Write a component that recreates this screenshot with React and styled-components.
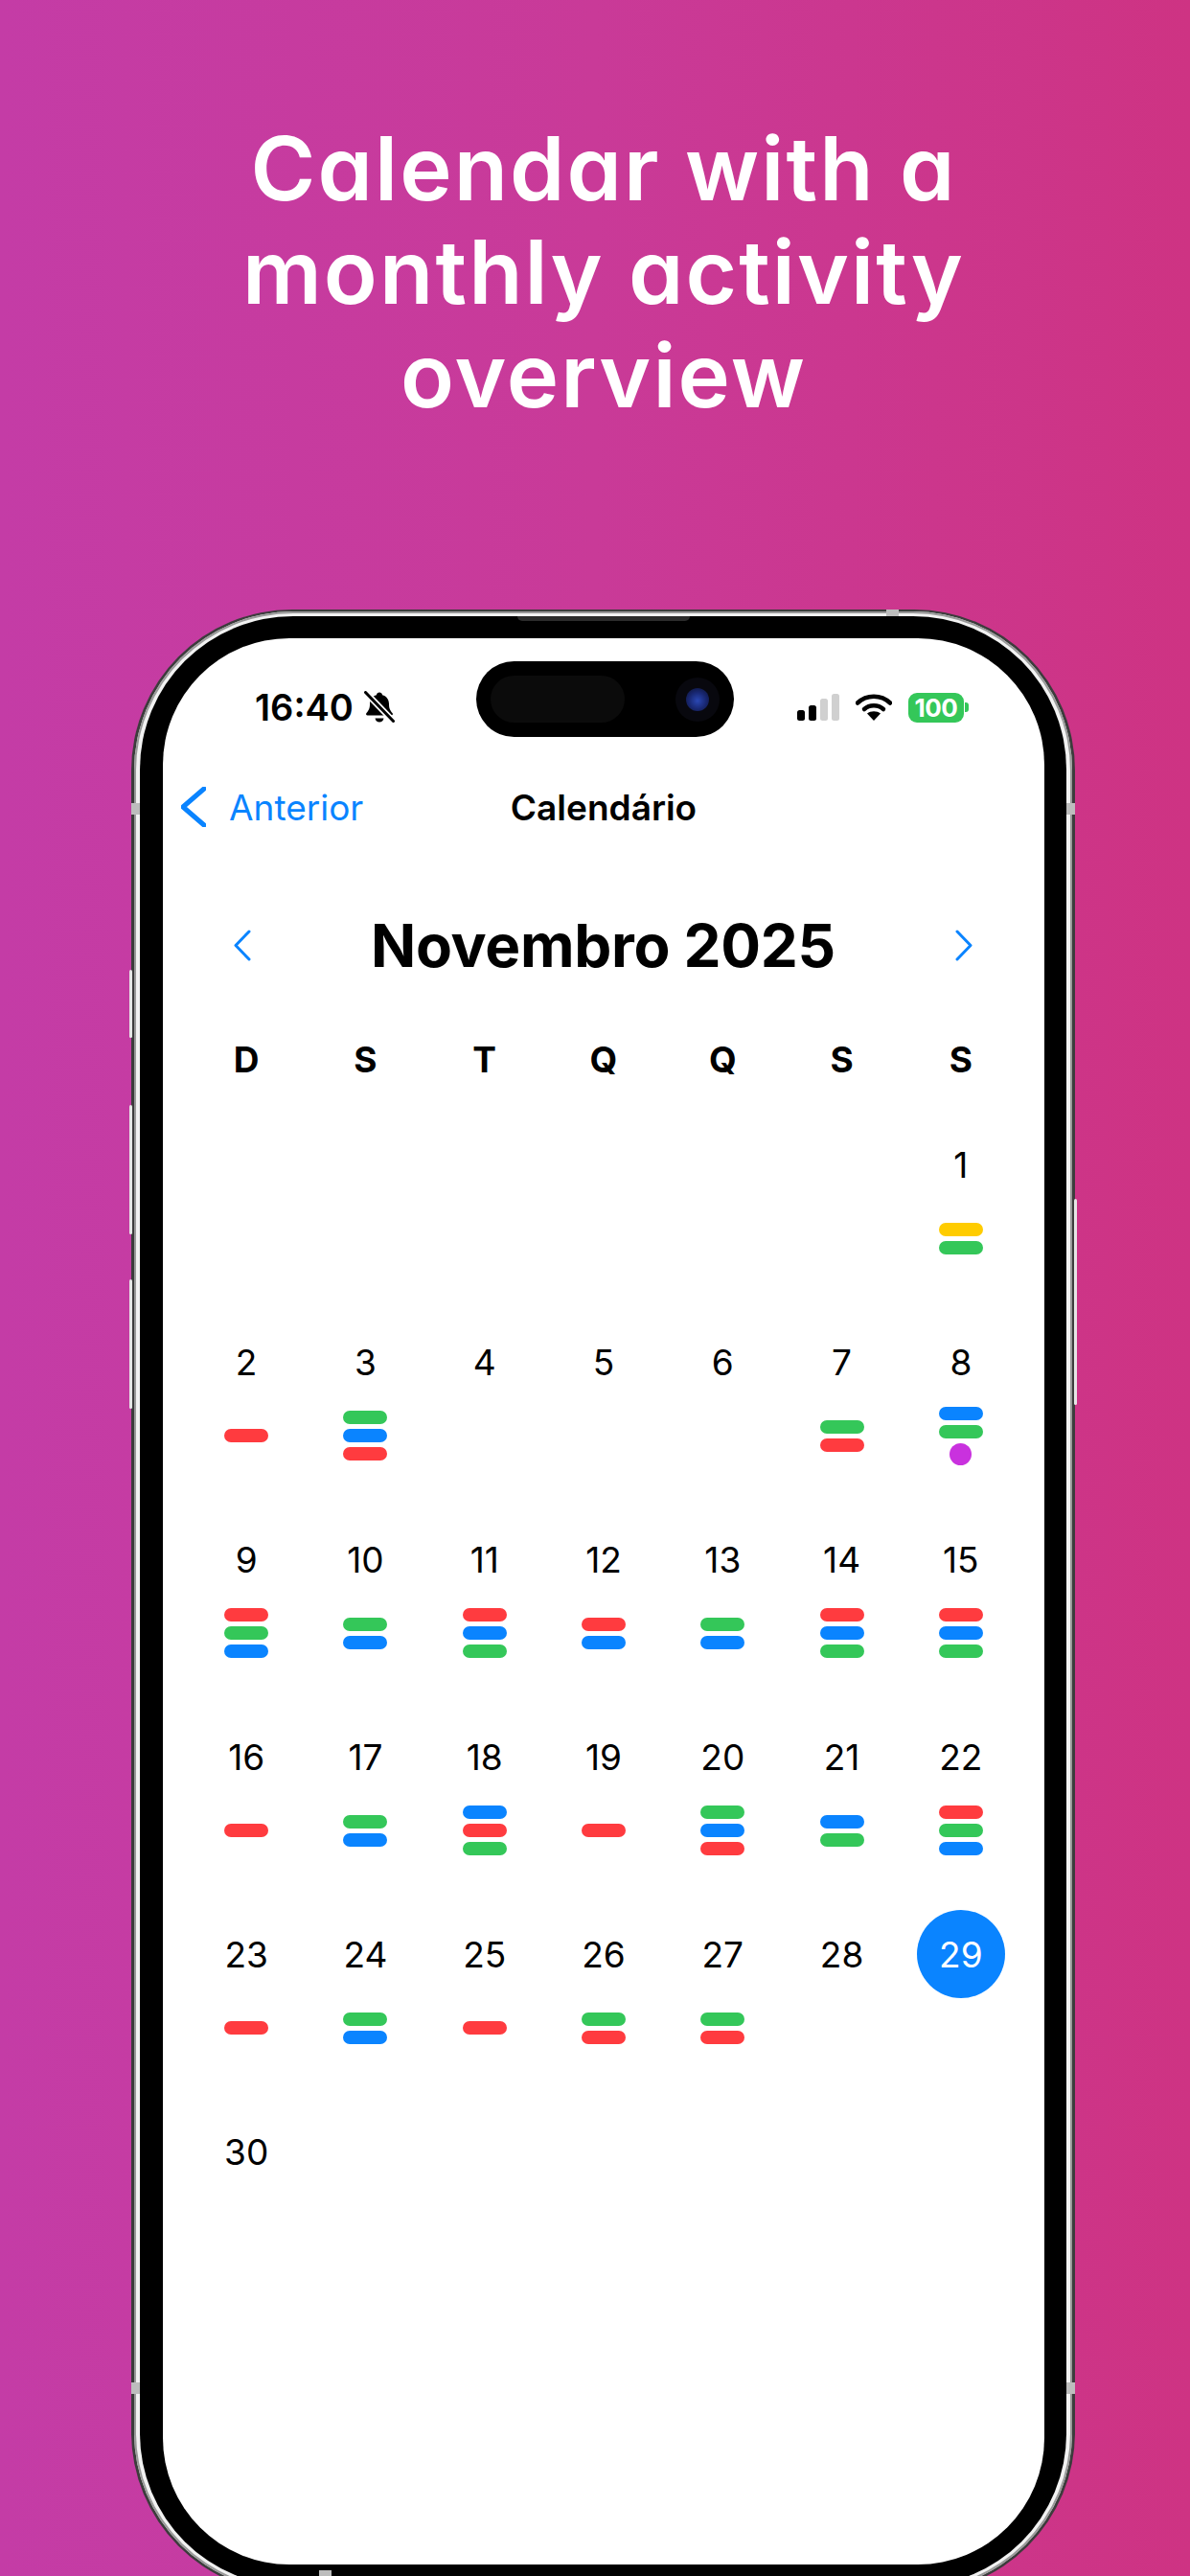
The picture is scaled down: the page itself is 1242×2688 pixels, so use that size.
import React from 'react'
import styled, { createGlobalStyle } from 'styled-components'

const RED = '#ff3b3f'
const GREEN = '#34c759'
const BLUE = '#0a84ff'
const YELLOW = '#ffcc00'
const PURPLE = '#c931de'

const r = RED
const g = GREEN
const b = BLUE
const y = YELLOW

const WEEK_DAYS = ['D', 'S', 'T', 'Q', 'Q', 'S', 'S']

const ACTIVITY = {
  1: [y, g],
  2: [r],
  3: [g, b, r],
  7: [g, r],
  8: [b, g],
  9: [r, g, b],
  10: [g, b],
  11: [r, b, g],
  12: [r, b],
  13: [g, b],
  14: [r, b, g],
  15: [r, b, g],
  16: [r],
  17: [g, b],
  18: [b, r, g],
  19: [r],
  20: [g, b, r],
  21: [b, g],
  22: [r, g, b],
  23: [r],
  24: [g, b],
  25: [r],
  26: [g, r],
  27: [g, r],
}

const GlobalStyle = createGlobalStyle`
  html, body {
    margin: 0;
    padding: 0;
    background: #c93a92;
  }
  * {
    box-sizing: border-box;
  }
`

const Page = styled.div`
  width: 1242px;
  height: 2688px;
  overflow: hidden;
  display: flex;
  flex-direction: column;
  background: linear-gradient(90deg, #c43ca6 0%, #c93a98 50%, #ce3383 100%);
  font-family: Inter, "Liberation Sans", sans-serif;
`

const Headline = styled.h1`
  margin: 0;
  padding: 122px 0 0 18px;
  height: 446px;
  text-align: center;
  color: #fff;
  font-size: 92px;
  line-height: 108px;
  font-weight: 600;
  letter-spacing: 2.1px;
  font-feature-settings: "cv11" 1;
`

const Phone = styled.div`
  position: relative;
  flex: none;
  margin-top: 190px;
  margin-left: 137px;
  width: 985px;
  height: 2070px;
  padding: 2px 3px;
  border-radius: 168px;
  background: #3c3c3c;
`

const Rim = styled.div`
  height: 100%;
  padding: 5px 6px;
  border-radius: 166px;
  background: #f2f2f2;
  box-shadow: inset 0 0 0 2px #9a9a9a;
`

const Bezel = styled.div`
  height: 100%;
  padding: 23px 23px 23px 24px;
  border-radius: 160px;
  background: #000;
`

const Screen = styled.div`
  position: relative;
  height: 100%;
  overflow: hidden;
  border-radius: 132px;
  background: #fff;
  color: #000;
`

const SideKey = styled.span`
  position: absolute;
  left: ${p => (p.$right ? '984px' : '-2px')};
  top: ${p => p.$top}px;
  width: 3px;
  height: ${p => p.$height}px;
  border-radius: 2px;
  background: #e6e6e6;
`

const AntennaBand = styled.span`
  position: absolute;
  left: ${p => p.$left}px;
  top: ${p => p.$top}px;
  width: ${p => p.$width}px;
  height: ${p => p.$height}px;
  background: #bdbdbd;
`

const Speaker = styled.span`
  position: absolute;
  left: 403px;
  top: 7px;
  width: 180px;
  height: 5px;
  border-radius: 0 0 6px 6px;
  background: #2b2b2b;
`

const Island = styled.div`
  position: absolute;
  left: 327px;
  top: 24px;
  width: 269px;
  height: 79px;
  display: flex;
  align-items: center;
  justify-content: space-between;
  padding-left: 15px;
  padding-right: 15px;
  border-radius: 40px;
  background: #000;
`

const IslandSensor = styled.span`
  width: 140px;
  height: 49px;
  border-radius: 25px;
  background: #0b0b0b;
`

const Lens = styled.span`
  width: 46px;
  height: 46px;
  display: flex;
  align-items: center;
  justify-content: center;
  border-radius: 50%;
  background: #08080e;

  &::after {
    content: '';
    width: 24px;
    height: 24px;
    border-radius: 50%;
    background: radial-gradient(circle at 50% 55%, #2a48b4 0%, #1a2a78 45%, #0a0f2c 100%);
  }
`

const StatusBar = styled.div`
  height: 144px;
  display: flex;
  align-items: center;
  justify-content: space-between;
  padding: 0 79px 0 96px;
`

const StatusGroup = styled.div`
  display: flex;
  align-items: center;
  gap: ${p => p.$gap}px;
`

const Clock = styled.span`
  font-size: 38px;
  font-weight: 600;
  line-height: 1;
`

const Signal = styled.div`
  display: flex;
  align-items: flex-end;
  gap: 4px;
  height: 28px;
`

const SignalBar = styled.span`
  width: 8px;
  height: ${p => p.$height}px;
  border-radius: 2.5px;
  background: ${p => (p.$off ? '#d0d0d0' : '#000')};
`

const Battery = styled.div`
  display: flex;
  align-items: center;
  gap: 1px;
`

const BatteryBody = styled.div`
  width: 58px;
  height: 31px;
  display: flex;
  align-items: center;
  justify-content: center;
  border-radius: 9px;
  background: ${GREEN};
  color: #fff;
  font-size: 26px;
  font-weight: 700;
  letter-spacing: -0.5px;
`

const BatteryNub = styled.span`
  width: 4px;
  height: 10px;
  border-radius: 0 3px 3px 0;
  background: ${GREEN};
`

const NavBar = styled.div`
  height: 64px;
  display: grid;
  grid-template-columns: 1fr auto 1fr;
  align-items: center;
  padding-left: 19px;
  padding-right: 19px;
  font-size: 37px;
`

const BackLink = styled.div`
  display: flex;
  align-items: center;
  gap: 24px;
  color: ${BLUE};
`

const NavTitle = styled.div`
  font-weight: 600;
`

const MonthRow = styled.div`
  height: 100px;
  margin-top: 62px;
  display: flex;
  align-items: center;
  justify-content: space-between;
  padding: 0 75px 0 74px;
`

const MonthTitle = styled.div`
  font-size: 62px;
  font-weight: 700;
  letter-spacing: -0.3px;
`

const CalendarBody = styled.div`
  padding: 0 25px;
`

const WeekRow = styled.div`
  height: 50px;
  margin-top: 44px;
  display: grid;
  grid-template-columns: repeat(7, 1fr);
  align-items: center;
  text-align: center;
  font-size: 37px;
  font-weight: 700;
`

const DaysGrid = styled.div`
  margin-top: 39px;
  display: grid;
  grid-template-columns: repeat(7, 1fr);
  grid-auto-rows: 206px;
`

const DayCell = styled.div`
  display: flex;
  flex-direction: column;
  align-items: center;
`

const DayNumber = styled.div`
  width: 92px;
  height: 92px;
  display: flex;
  align-items: center;
  justify-content: center;
  border-radius: 50%;
  font-size: 37px;
  background: ${p => (p.$today ? BLUE : 'transparent')};
  color: ${p => (p.$today ? '#fff' : '#000')};
`

const Bars = styled.div`
  height: 62px;
  display: flex;
  flex-direction: column;
  align-items: center;
  justify-content: center;
  gap: 5px;
`

const Bar = styled.span`
  width: 46px;
  height: 14px;
  border-radius: 7px;
  background: ${p => p.$color};
`

const Dot = styled.span`
  width: 23px;
  height: 23px;
  border-radius: 50%;
  background: ${PURPLE};
`

function BellSlash() {
  return (
    <svg width="32" height="34" viewBox="0 0 32 34">
      <path d="M16 1.5c1.6 0 2.8 1.1 3 2.7 4.6 1.2 7 5 7 9.5 0 4.800 1.500 7 3.500 9.300.9 1.100.3 2.500-1.100 2.500H3.600c-1.400 0-2-1.400-1.100-2.500C4.500 20.700 6 18.500 6 13.700c0-4.500 2.400-8.300 7-9.500.2-1.600 1.400-2.700 3-2.700z" fill="#000" />
      <path d="M11.500 28.500h9c-.4 2.400-2.200 4-4.500 4s-4.100-1.600-4.500-4z" fill="#000" />
      <path d="M2 2l28 29" stroke="#fff" strokeWidth="6.500" />
      <path d="M1.500 1.500l29 30" stroke="#000" strokeWidth="3" strokeLinecap="round" />
    </svg>
  )
}

function WifiIcon() {
  return (
    <svg width="38" height="28" viewBox="0 0 38 28">
      <path d="M2 9.500C11.500.5 26.500.5 36 9.500" fill="none" stroke="#000" strokeWidth="4.500" strokeLinecap="round" />
      <path d="M9 16c5.500-5 14.500-5 20 0" fill="none" stroke="#000" strokeWidth="4.500" strokeLinecap="round" />
      <path d="M19 28l-7-7.500c3.800-3 10.200-3 14 0z" fill="#000" />
    </svg>
  )
}

function Chevron({ width, height, direction, strokeWidth }) {
  const d = direction === 'left'
    ? `M${width - 2} 2L2 ${height / 2}L${width - 2} ${height - 2}`
    : `M2 2L${width - 2} ${height / 2}L2 ${height - 2}`
  return (
    <svg width={width} height={height} viewBox={`0 0 ${width} ${height}`}>
      <path d={d} fill="none" stroke={BLUE} strokeWidth={strokeWidth} strokeLinecap="round" strokeLinejoin="round" />
    </svg>
  )
}

function Day({ day }) {
  const colors = ACTIVITY[day] || []
  return (
    <DayCell>
      <DayNumber $today={day === 29}>{day}</DayNumber>
      <Bars>
        {colors.map((color, i) => <Bar key={i} $color={color} />)}
        {day === 8 && <Dot />}
      </Bars>
    </DayCell>
  )
}

export default function App() {
  const days = Array.from({ length: 30 }, (_, i) => i + 1)

  return (
    <Page>
      <GlobalStyle />
      <Headline>
        Calendar with a<br />monthly activity<br />overview
      </Headline>
      <Phone>
        <SideKey $top={376} $height={71} />
        <SideKey $top={517} $height={135} />
        <SideKey $top={699} $height={135} />
        <SideKey $right $top={615} $height={215} />
        <AntennaBand $left={788} $top={0} $width={13} $height={7} />
        <AntennaBand $left={196} $top={2046} $width={13} $height={7} />
        <AntennaBand $left={0} $top={202} $width={9} $height={12} />
        <AntennaBand $left={976} $top={202} $width={9} $height={12} />
        <AntennaBand $left={0} $top={1850} $width={9} $height={12} />
        <AntennaBand $left={976} $top={1850} $width={9} $height={12} />
        <Speaker />
        <Rim>
          <Bezel>
            <Screen>
              <Island>
                <IslandSensor />
                <Lens />
              </Island>
              <StatusBar>
                <StatusGroup $gap={11}>
                  <Clock>16:40</Clock>
                  <BellSlash />
                </StatusGroup>
                <StatusGroup $gap={17}>
                  <Signal>
                    <SignalBar $height={11} />
                    <SignalBar $height={16} />
                    <SignalBar $height={23} $off />
                    <SignalBar $height={28} $off />
                  </Signal>
                  <WifiIcon />
                  <Battery>
                    <BatteryBody>100</BatteryBody>
                    <BatteryNub />
                  </Battery>
                </StatusGroup>
              </StatusBar>
              <NavBar>
                <BackLink>
                  <Chevron width={26} height={42} direction="left" strokeWidth={5} />
                  Anterior
                </BackLink>
                <NavTitle>Calendário</NavTitle>
              </NavBar>
              <MonthRow>
                <Chevron width={18} height={33} direction="left" strokeWidth={3} />
                <MonthTitle>Novembro 2025</MonthTitle>
                <Chevron width={18} height={33} direction="right" strokeWidth={3} />
              </MonthRow>
              <CalendarBody>
                <WeekRow>
                  {WEEK_DAYS.map((label, i) => <div key={i}>{label}</div>)}
                </WeekRow>
                <DaysGrid>
                  {Array.from({ length: 6 }, (_, i) => <div key={`blank-${i}`} />)}
                  {days.map(day => <Day key={day} day={day} />)}
                </DaysGrid>
              </CalendarBody>
            </Screen>
          </Bezel>
        </Rim>
      </Phone>
    </Page>
  )
}
